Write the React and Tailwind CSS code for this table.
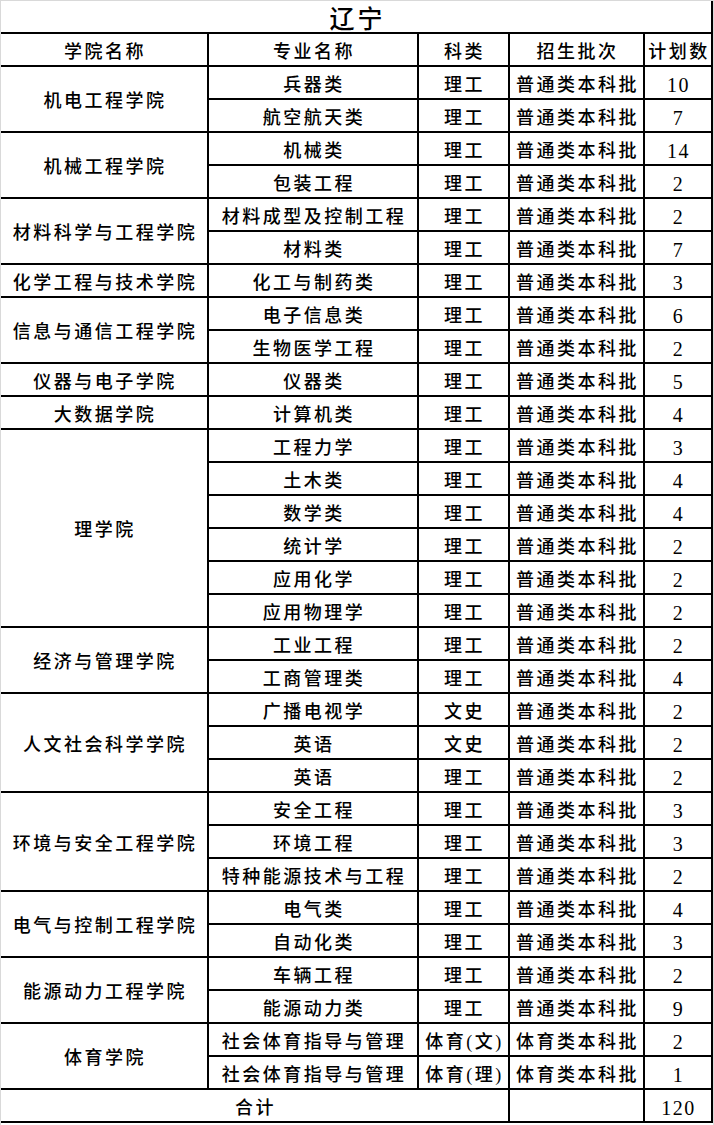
import React from "react";

const groups = [
  ["机电工程学院", [["兵器类", "理工", "普通类本科批", "10"], ["航空航天类", "理工", "普通类本科批", "7"]]],
  ["机械工程学院", [["机械类", "理工", "普通类本科批", "14"], ["包装工程", "理工", "普通类本科批", "2"]]],
  ["材料科学与工程学院", [["材料成型及控制工程", "理工", "普通类本科批", "2"], ["材料类", "理工", "普通类本科批", "7"]]],
  ["化学工程与技术学院", [["化工与制药类", "理工", "普通类本科批", "3"]]],
  ["信息与通信工程学院", [["电子信息类", "理工", "普通类本科批", "6"], ["生物医学工程", "理工", "普通类本科批", "2"]]],
  ["仪器与电子学院", [["仪器类", "理工", "普通类本科批", "5"]]],
  ["大数据学院", [["计算机类", "理工", "普通类本科批", "4"]]],
  ["理学院", [
    ["工程力学", "理工", "普通类本科批", "3"],
    ["土木类", "理工", "普通类本科批", "4"],
    ["数学类", "理工", "普通类本科批", "4"],
    ["统计学", "理工", "普通类本科批", "2"],
    ["应用化学", "理工", "普通类本科批", "2"],
    ["应用物理学", "理工", "普通类本科批", "2"],
  ]],
  ["经济与管理学院", [["工业工程", "理工", "普通类本科批", "2"], ["工商管理类", "理工", "普通类本科批", "4"]]],
  ["人文社会科学学院", [["广播电视学", "文史", "普通类本科批", "2"], ["英语", "文史", "普通类本科批", "2"], ["英语", "理工", "普通类本科批", "2"]]],
  ["环境与安全工程学院", [["安全工程", "理工", "普通类本科批", "3"], ["环境工程", "理工", "普通类本科批", "3"], ["特种能源技术与工程", "理工", "普通类本科批", "2"]]],
  ["电气与控制工程学院", [["电气类", "理工", "普通类本科批", "4"], ["自动化类", "理工", "普通类本科批", "3"]]],
  ["能源动力工程学院", [["车辆工程", "理工", "普通类本科批", "2"], ["能源动力类", "理工", "普通类本科批", "9"]]],
  ["体育学院", [["社会体育指导与管理", "体育(文)", "体育类本科批", "2"], ["社会体育指导与管理", "体育(理)", "体育类本科批", "1"]]],
];

const spanClass = { 1: "row-span-1", 2: "row-span-2", 3: "row-span-3", 6: "row-span-6" };

function Cell({ children, className = "" }) {
  return (
    <div className={`bg-white flex items-center justify-center pt-[5px] pl-[2px] text-[18px] tracking-[2.5px] whitespace-nowrap ${className}`}>
      {children}
    </div>
  );
}

function Num({ children, className = "" }) {
  return (
    <div className={`bg-white flex items-center justify-center pt-[4px] pl-[1px] text-[20px] tracking-[1.5px] ${className}`}>
      {children}
    </div>
  );
}

export default function App() {
  const cells = [];
  cells.push(<Cell key="h1">学院名称</Cell>);
  cells.push(<Cell key="h2">专业名称</Cell>);
  cells.push(<Cell key="h3">科类</Cell>);
  cells.push(<Cell key="h4">招生批次</Cell>);
  cells.push(<Cell key="h5">计划数</Cell>);
  groups.forEach(([college, rows], gi) => {
    cells.push(
      <Cell key={`c${gi}`} className={`col-start-1 ${spanClass[rows.length]}`}>
        {college}
      </Cell>
    );
    rows.forEach((r, ri) => {
      cells.push(<Cell key={`m${gi}-${ri}`} className="col-start-2">{r[0]}</Cell>);
      cells.push(<Cell key={`k${gi}-${ri}`} className={r[1].length > 2 ? "tracking-[1px] pl-0" : ""}>{r[1]}</Cell>);
      cells.push(<Cell key={`b${gi}-${ri}`}>{r[2]}</Cell>);
      cells.push(<Num key={`n${gi}-${ri}`}>{r[3]}</Num>);
    });
  });
  cells.push(<Cell key="t1" className="col-start-1 col-span-3">合计</Cell>);
  cells.push(<div key="t2" className="bg-white" />);
  cells.push(<Num key="t3">120</Num>);

  return (
    <div
      className="w-[714px] h-[1125px] bg-white border-l border-t border-r border-[#d9d9d9] text-black font-medium"
      style={{ fontFamily: '"Liberation Serif", "Noto Sans CJK SC", serif' }}
    >
      <div className="border-r-2 border-b-2 border-black bg-black">
        <div className="h-[33px] bg-white flex items-center justify-center pt-[6px] pl-[3px] text-[25px] tracking-[3px] border-b-2 border-black">
          辽宁
        </div>
        <div className="grid grid-cols-[206px_208px_89px_133px_66px] grid-rows-[repeat(33,31px)] gap-[2px] bg-black">
          {cells}
        </div>
      </div>
    </div>
  );
}
